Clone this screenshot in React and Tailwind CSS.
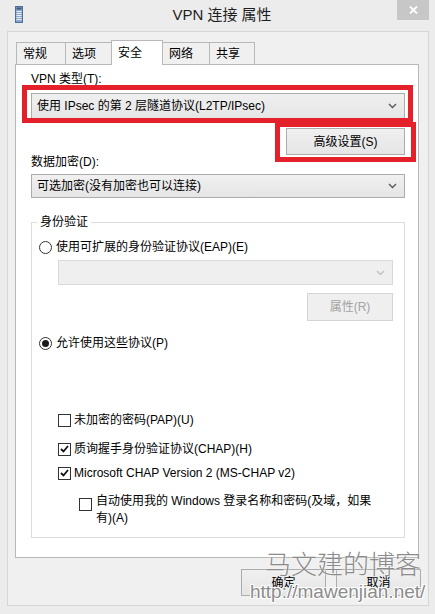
import React from 'react';

const Chevron = ({ color }) => (
  <svg width="9" height="6" viewBox="0 0 9 6">
    <path d="M1 1l3.5 3.5L8 1" fill="none" stroke={color} strokeWidth="1.4" />
  </svg>
);

const ServerIcon = () => (
  <svg width="8" height="17" viewBox="0 0 8 17">
    <rect x="0.5" y="0.5" width="7" height="16" fill="#8aa6c8" stroke="#4f6f98" />
    <rect x="1.5" y="1.5" width="5" height="2" fill="#3d5a82" />
    <path d="M1.5 5.5h5M1.5 7.5h5M1.5 9.5h5M1.5 11.5h5M1.5 13.5h5" stroke="#e8eef6" strokeWidth="1" />
  </svg>
);

const Select = ({ value, disabled, className }) => (
  <div
    className={`flex items-center justify-between border pl-[5px] pr-[7px] ${
      disabled
        ? 'border-[#d9d9d9] bg-[#efefef]'
        : 'border-[#acacac] bg-gradient-to-b from-[#f0f0f0] to-[#e5e5e5]'
    } ${className}`}
  >
    <span className="leading-[14px]">{value}</span>
    <Chevron color={disabled ? '#c2c2c2' : '#5a5a5a'} />
  </div>
);

const Button = ({ children, disabled, className }) => (
  <div
    className={`flex items-center justify-center border leading-[14px] ${
      disabled
        ? 'border-[#d5d5d5] bg-[#efefef] text-[#a3a3a3]'
        : 'border-[#acacac] bg-gradient-to-b from-[#f0f0f0] to-[#e5e5e5]'
    } ${className}`}
  >
    {children}
  </div>
);

const Radio = ({ checked, label, className }) => (
  <div className={`flex items-center h-[16px] ${className}`}>
    <div className="w-[13px] h-[13px] rounded-full border border-[#333] bg-white flex items-center justify-center">
      {checked && <div className="w-[7px] h-[7px] rounded-full bg-[#1a1a1a]" />}
    </div>
    <span className="ml-[4px] leading-[14px]">{label}</span>
  </div>
);

const Check = ({ checked }) => (
  <div className="w-[13px] h-[13px] shrink-0 border border-[#333] bg-white flex items-center justify-center">
    {checked && (
      <svg width="9" height="8" viewBox="0 0 9 8">
        <path d="M1 4l2.5 2.5L8 1" fill="none" stroke="#111" strokeWidth="1.8" />
      </svg>
    )}
  </div>
);

const tabs = [
  { name: '常规', w: 'w-[50px]' },
  { name: '选项', w: 'w-[47px]' },
  { name: '安全', w: 'w-[52px]', active: true },
  { name: '网络', w: 'w-[48px]' },
  { name: '共享', w: 'w-[46px]' },
];

export default function App() {
  return (
    <div className="relative w-[435px] h-[614px] overflow-hidden bg-[#ececec] text-[12px] text-black font-['Liberation_Sans','Noto_Sans_CJK_SC',sans-serif]">
      {/* Title bar */}
      <div className="h-[31px] flex items-start">
        <div className="flex-1 pl-[15px] pt-[6px]">
          <ServerIcon />
        </div>
        <div className="pt-[5px] text-[15px] leading-[20px] text-[#1e1e1e]">VPN 连接 属性</div>
        <div className="flex-1 flex justify-end pr-[6px]">
          <div className="w-[32px] h-[20px] bg-[#c7c7c7] flex items-center justify-center">
            <svg width="9" height="8" viewBox="0 0 9 8">
              <path d="M1 0.5l7 7M8 0.5l-7 7" stroke="#fff" strokeWidth="1.8" />
            </svg>
          </div>
        </div>
      </div>

      {/* Client area */}
      <div className="ml-[7px] w-[422px] h-[575px] border border-[#d6d6d6] bg-[#f0f0f0] flex flex-col">
        {/* Tabs */}
        <div className="mt-[8px] ml-[8px] h-[24px] flex items-end">
          {tabs.map((t, i) => (
            <div
              key={t.name}
              className={`${t.w} ${i > 0 ? '-ml-px' : ''} flex items-center pl-[6px] border-t border-l border-r border-[#b8b8b8] leading-[14px] ${
                t.active ? 'relative z-10 h-[25px] -mb-px bg-white' : 'h-[22px] bg-[#f0f0f0]'
              }`}
            >
              {t.name}
            </div>
          ))}
        </div>

        {/* Panel */}
        <div className="ml-[7px] w-[404px] h-[494px] border border-[#b8b8b8] bg-white flex flex-col pl-[15px] pr-[13px]">
          <div className="mt-[7px] h-[14px] leading-[14px]">VPN 类型(T):</div>
          <Select className="mt-[7px] h-[26px]" value="使用 IPsec 的第 2 层隧道协议(L2TP/IPsec)" />
          <div className="mt-[9px] flex justify-end">
            <Button className="w-[119px] h-[27px]">高级设置(S)</Button>
          </div>
          <div className="h-[14px] leading-[14px]">数据加密(D):</div>
          <Select className="mt-[5px] h-[24px]" value="可选加密(没有加密也可以连接)" />

          <fieldset className="mt-[17px] border border-[#dcdcdc] pb-[10px]">
            <legend className="ml-[5px] px-[3px] leading-[14px]">身份验证</legend>
            <Radio className="mt-[10px] pl-[7px]" label="使用可扩展的身份验证协议(EAP)(E)" />
            <div className="pl-[26px] pr-[11px] flex flex-col">
              <Select disabled className="mt-[5px] h-[25px]" value="" />
              <Button disabled className="mt-[8px] self-end w-[86px] h-[28px]">属性(R)</Button>
            </div>
            <Radio checked className="mt-[14px] pl-[7px]" label="允许使用这些协议(P)" />

            <div className="mt-[61px] pl-[26px] h-[16px] flex items-center">
              <Check />
              <span className="ml-[3px] leading-[14px]">未加密的密码(PAP)(U)</span>
            </div>
            <div className="mt-[13px] pl-[26px] h-[16px] flex items-center">
              <Check checked />
              <span className="ml-[3px] leading-[14px]">质询握手身份验证协议(CHAP)(H)</span>
            </div>
            <div className="mt-[8px] pl-[26px] h-[16px] flex items-center">
              <Check checked />
              <span className="ml-[3px] leading-[14px]">Microsoft CHAP Version 2 (MS-CHAP v2)</span>
            </div>
            <div className="mt-[12px] pl-[47px] flex items-start">
              <div className="mt-[5px]">
                <Check />
              </div>
              <span className="ml-[4px] leading-[17px]">
                自动使用我的 Windows 登录名称和密码(及域，如果
                <br />
                有)(A)
              </span>
            </div>
          </fieldset>
        </div>

        {/* Dialog buttons */}
        <div className="mt-[11px] pr-[7px] flex justify-end gap-[10px]">
          <Button className="w-[85px] h-[27px]">确定</Button>
          <Button className="w-[85px] h-[27px]">取消</Button>
        </div>
      </div>

      {/* Annotation boxes */}
      <div className="absolute left-[22px] top-[85px] w-[391px] h-[38px] border-[5px] border-[#e4202a]" />
      <div className="absolute left-[275px] top-[122px] w-[141px] h-[40px] border-[5px] border-[#e4202a]" />

      {/* Watermark */}
      <div className="absolute left-[265px] top-[549px] text-[26px] leading-[28px] font-light font-['Noto_Sans_CJK_SC',sans-serif] text-[#8b8b8b] [text-shadow:0_0_2px_#fff]">
        马文建的博客
      </div>
      <div className="absolute left-[250px] top-[582px] text-[19px] leading-[20px] font-['Liberation_Sans',sans-serif] text-[#8c8c8c] [text-shadow:1px_1px_0_#fff,-1px_-1px_0_#fff,1px_-1px_0_#fff,-1px_1px_0_#fff]">
        http://mawenjian.net/
      </div>
    </div>
  );
}
